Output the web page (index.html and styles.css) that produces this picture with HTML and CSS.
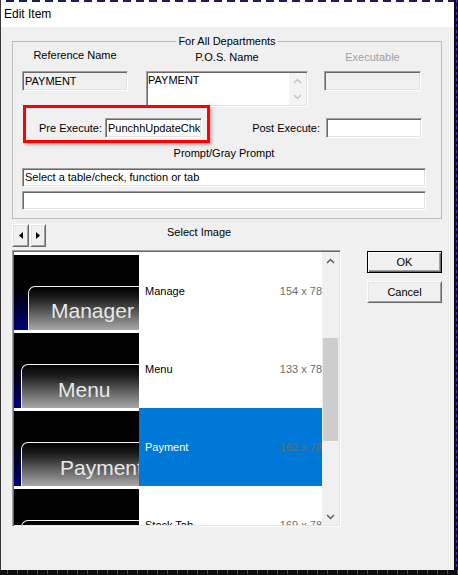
FILE: index.html
```html
<!DOCTYPE html>
<html lang="en">

<head>
  <meta charset="UTF-8" />
  <title>Edit Item</title>
  <link rel="stylesheet" href="styles.css">
</head>

<body>
  <div class="desk">
    <div class="window">
      <div class="topline"></div>
      <div class="titlebar">Edit Item</div>

      <div class="client">
        <div class="group">
          <span class="group-caption">For All Departments</span>

          <div class="names">
            <div class="col col-ref">
              <div class="lbl">Reference Name</div>
              <div class="field disabled">PAYMENT</div>
            </div>
            <div class="col col-pos">
              <div class="lbl">P.O.S. Name</div>
              <div class="field memo">
                <div class="memo-text">PAYMENT</div>
                <div class="memo-scroll">
                  <div class="memo-arrow"><svg width="9" height="6"><polyline points="1,5 4.5,1.5 8,5" fill="none" stroke="#c4c4c4" stroke-width="1.5"/></svg></div>
                  <div class="memo-arrow"><svg width="9" height="6"><polyline points="1,1 4.5,4.5 8,1" fill="none" stroke="#c4c4c4" stroke-width="1.5"/></svg></div>
                </div>
              </div>
            </div>
            <div class="col col-exe">
              <div class="lbl grayed">Executable</div>
              <div class="field disabled"></div>
            </div>
          </div>

          <div class="execs">
            <div class="pre">
              <span class="lbl">Pre Execute:</span>
              <div class="field">PunchhUpdateChk</div>
              <div class="callout"></div>
            </div>
            <div class="post">
              <span class="lbl">Post Execute:</span>
              <div class="field"></div>
            </div>
          </div>

          <div class="prompt-lbl">Prompt/Gray Prompt</div>
          <div class="field wide">Select a table/check, function or tab</div>
          <div class="field wide second"></div>
        </div>

        <div class="lower">
          <div class="picker">
            <div class="picker-nav">
              <div class="spin">
                <div class="btn spin-btn"><svg width="4" height="7"><polygon points="4,0 0,3.5 4,7" fill="#000"/></svg></div>
                <div class="btn spin-btn"><svg width="4" height="7"><polygon points="0,0 4,3.5 0,7" fill="#000"/></svg></div>
              </div>
              <div class="picker-title">Select Image</div>
            </div>

            <div class="listbox">
              <div class="rows">
                <div class="row">
                  <div class="thumb"><div class="cap cap-wide">Manager</div></div>
                  <div class="info"><span>Manage</span><span class="dims">154 x 78</span></div>
                </div>
                <div class="row">
                  <div class="thumb"><div class="cap cap-menu">Menu</div></div>
                  <div class="info"><span>Menu</span><span class="dims">133 x 78</span></div>
                </div>
                <div class="row sel">
                  <div class="thumb"><div class="cap cap-pay">Payment</div></div>
                  <div class="info"><span>Payment</span><span class="dims">162 x 78</span></div>
                </div>
                <div class="row">
                  <div class="thumb"><div class="cap cap-pay">Stock Tab</div></div>
                  <div class="info"><span>Stock Tab</span><span class="dims">169 x 78</span></div>
                </div>
              </div>
              <div class="vscroll">
                <div class="sb-arrow"><svg width="9" height="6"><polyline points="1,5 4.5,1.5 8,5" fill="none" stroke="#606060" stroke-width="1.5"/></svg></div>
                <div class="sb-track"><div class="sb-thumb"></div></div>
                <div class="sb-arrow"><svg width="9" height="6"><polyline points="1,1 4.5,4.5 8,1" fill="none" stroke="#606060" stroke-width="1.5"/></svg></div>
              </div>
            </div>
          </div>

          <div class="actions">
            <div class="btn push default">OK</div>
            <div class="btn push">Cancel</div>
          </div>
        </div>
      </div>
    </div>
    <div class="edge"></div>
  </div>
  <div class="bottom-edge"></div>
</body>

</html>
```

FILE: styles.css
```css
body {
  margin: 0;
  background: #0d0d12;
  font-family: "Liberation Sans", Arial, sans-serif;
  font-size: 11px;
  color: #000;
}

.desk {
  display: flex;
}

.window {
  width: 454px;
  height: 570px;
  box-sizing: border-box;
  border-left: 1px solid #3a3a3a;
  background: #f0f0f0;
}

.topline {
  height: 2px;
  background: repeating-linear-gradient(to right, #ffffff 0 5px, #1c1c5e 5px 13px);
}

.titlebar {
  height: 25px;
  line-height: 25px;
  padding-left: 3px;
  background: #fff;
  font-size: 12px;
}

.edge {
  width: 4px;
  height: 570px;
  background: repeating-linear-gradient(to bottom, #5a2bd6 0 3px, #0d0d12 3px 6px) 2px 0 / 1px 100% no-repeat, #0d0d12;
}

.bottom-edge {
  height: 5px;
  background: repeating-linear-gradient(to right, #0d0d12 0 7px, #5a2bd6 7px 8px, #0d0d12 8px 10px) 0 0 / 100% 4px no-repeat, #0d0d12;
}

.client {
  padding: 14px 0 0 11px;
}

/* group box */
.group {
  position: relative;
  width: 430px;
  box-sizing: border-box;
  border: 1px solid #bdbdbd;
  padding-bottom: 8px;
}

.group-caption {
  position: absolute;
  top: -7px;
  left: 50%;
  transform: translateX(-50%);
  padding: 0 2px;
  line-height: 13px;
  background: #f0f0f0;
  white-space: nowrap;
}

/* sunken edit fields */
.field {
  box-sizing: border-box;
  height: 20px;
  line-height: 18px;
  padding: 0 2px;
  border: 1px solid;
  border-color: #a0a0a0 #fff #fff #a0a0a0;
  box-shadow: inset 1px 1px #696969, inset -1px -1px #e3e3e3;
  background: #fff;
  white-space: nowrap;
  overflow: hidden;
}

.field.disabled {
  background: #f0f0f0;
}

.names {
  display: flex;
  align-items: flex-start;
  padding-top: 7px;
}

.col .lbl {
  height: 13px;
  line-height: 13px;
  margin-bottom: 9px;
  text-align: center;
}

.col-pos .lbl,
.col-exe .lbl {
  padding-top: 2px;
  margin-bottom: 7px;
}

.lbl.grayed {
  color: #a0a0a0;
}

.col-ref {
  width: 106px;
  margin-left: 9px;
}

.col-pos {
  width: 162px;
  margin-left: 18px;
}

.col-exe {
  width: 97px;
  margin-left: 16px;
}

.memo {
  display: flex;
  height: 36px;
  padding: 0 0 0 1px;
}

.memo-text {
  flex: 1;
  line-height: 16px;
}

.memo-scroll {
  width: 17px;
  margin: 1px 1px 1px 0;
  background: #f4f4f4;
}

.memo-arrow {
  height: 16px;
  display: flex;
  align-items: center;
  justify-content: center;
}

.execs {
  display: flex;
  align-items: center;
  height: 20px;
  margin-top: 11px;
}

.pre,
.post {
  display: flex;
  align-items: center;
}

.pre {
  position: relative;
  margin-left: 21px;
}

.pre .lbl {
  width: 68px;
  text-align: right;
}

.pre .field {
  width: 97px;
  margin-left: 3px;
}

.post {
  margin-left: 48px;
}

.post .lbl {
  width: 70px;
  text-align: right;
}

.post .field {
  width: 96px;
  margin-left: 6px;
}

/* red highlight drawn over the pre execute field */
.callout {
  position: absolute;
  left: -11px;
  top: -13px;
  width: 187px;
  height: 38px;
  box-sizing: border-box;
  border: 3px solid #f00;
  box-shadow: 2px 2px 3px rgba(0, 0, 0, 0.25);
  pointer-events: none;
}

.prompt-lbl {
  width: 404px;
  margin: 9px 0 0 9px;
  line-height: 13px;
  text-align: center;
}

.field.wide {
  width: 404px;
  height: 19px;
  line-height: 17px;
  margin: 8px 0 0 9px;
}

.field.wide.second {
  margin-top: 4px;
}

/* raised buttons */
.btn {
  box-sizing: border-box;
  border: 1px solid;
  border-color: #fff #696969 #696969 #fff;
  box-shadow: inset 1px 1px #e3e3e3, inset -1px -1px #a0a0a0;
  background: #f0f0f0;
  display: flex;
  align-items: center;
  justify-content: center;
}

.lower {
  display: flex;
  margin-top: 5px;
}

.picker {
  width: 329px;
}

.picker-nav {
  display: flex;
  align-items: center;
  height: 23px;
}

.spin {
  display: flex;
}

.spin-btn {
  width: 17px;
  height: 23px;
}

.spin-btn + .spin-btn {
  width: 16px;
  margin-left: 1px;
}

.picker-title {
  margin-left: 121px;
  margin-top: -8px;
}

.listbox {
  display: flex;
  height: 277px;
  margin-top: 3px;
  box-sizing: border-box;
  padding: 1px;
  border: 1px solid;
  border-color: #a0a0a0 #fff #fff #a0a0a0;
  box-shadow: inset 1px 1px #696969, inset -1px -1px #e3e3e3;
  background: #fff;
  overflow: hidden;
}

.rows {
  flex: 1;
  overflow: hidden;
}

.row {
  display: flex;
  height: 78px;
}

.thumb {
  flex: none;
  width: 125px;
  height: 75px;
  margin-top: 3px;
  box-sizing: border-box;
  padding-top: 31px;
  overflow: hidden;
  background: linear-gradient(to top, #00007c, #000 55%);
}

.cap {
  width: 220px;
  height: 44px;
  box-sizing: border-box;
  margin-left: 7px;
  padding: 13px 0 0 38px;
  border-top: 1px solid #f4f4f4;
  border-left: 1px solid #f4f4f4;
  border-top-left-radius: 7px;
  background: linear-gradient(#000, #1c1c1c 25%, #a8a8a8);
  color: #e8e8e8;
  font-size: 21px;
  line-height: 24px;
  white-space: nowrap;
}

.cap-wide {
  margin-left: 14px;
  padding: 12px 0 0 22px;
}

.cap-menu {
  padding-left: 36px;
}

.info {
  flex: 1;
  display: flex;
  align-items: center;
  justify-content: space-between;
  padding-left: 6px;
}

.dims {
  color: #6d6d6d;
}

.row.sel .info {
  background: #0078d7;
  color: #fff;
}

.vscroll {
  width: 17px;
  display: flex;
  flex-direction: column;
  background: #f0f0f0;
}

.sb-arrow {
  height: 17px;
  display: flex;
  align-items: center;
  justify-content: center;
}

.sb-track {
  flex: 1;
}

.sb-thumb {
  height: 103px;
  margin: 69px 1px 0 1px;
  background: #cdcdcd;
}

.actions {
  display: flex;
  flex-direction: column;
  gap: 8px;
  margin-left: 26px;
  padding-top: 27px;
}

.push {
  width: 75px;
  height: 22px;
}

.push.default {
  border: 1px solid #000;
  box-shadow: inset 1px 1px #fff, inset -1px -1px #696969, inset -2px -2px #a0a0a0;
}
```
